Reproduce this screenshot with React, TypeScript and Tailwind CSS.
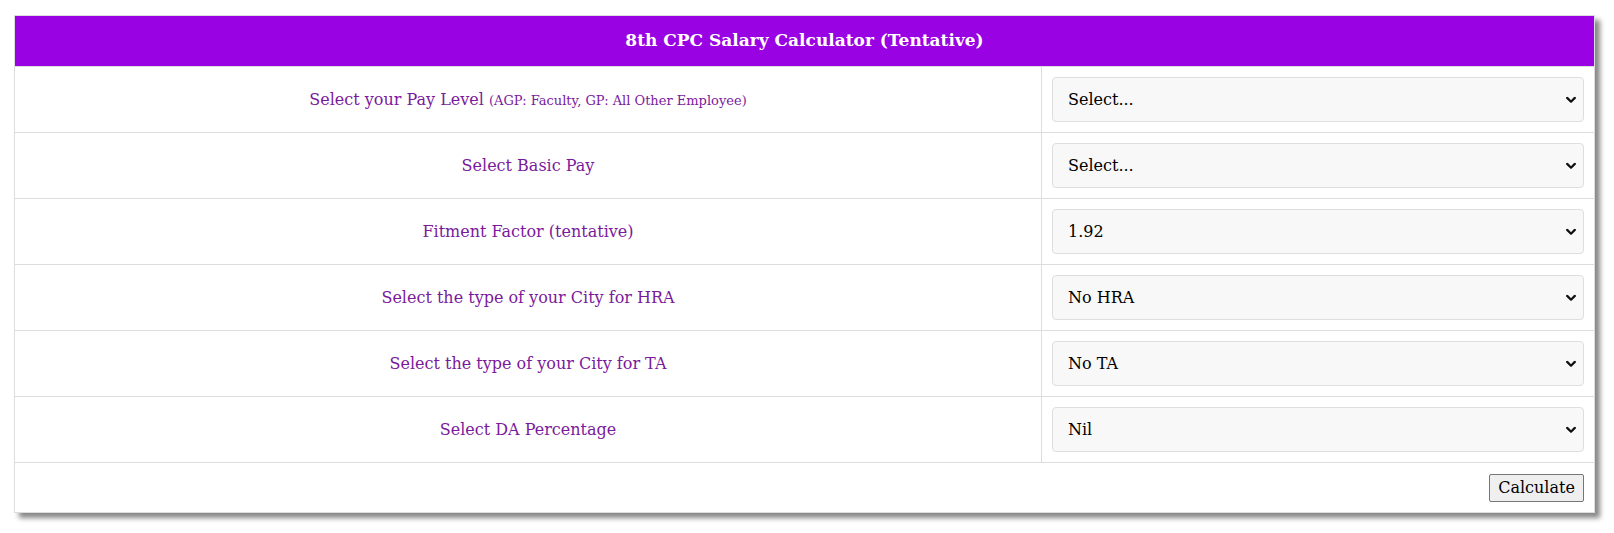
import React from "react";

const serif = "font-['DejaVu_Serif','Liberation_Serif',serif]";

function Chevron() {
  return (
    <svg
      className="pointer-events-none absolute right-[8px] top-1/2 -translate-y-1/2"
      width="10"
      height="7"
      viewBox="0 0 10 7"
      fill="none"
    >
      <path d="M1.2 1.4 L5 5.2 L8.8 1.4" stroke="#111" strokeWidth="2.2" strokeLinecap="round" strokeLinejoin="round" />
    </svg>
  );
}

function Sel({ value }: { value: string }) {
  return (
    <div className="relative h-[45px] w-full">
      <select
        defaultValue={value}
        className={`h-[45px] w-full appearance-none rounded-[4px] border border-[#dedede] bg-[#f8f8f8] pl-[15px] pr-8 text-[16px] text-black outline-none ${serif}`}
      >
        <option>{value}</option>
      </select>
      <Chevron />
    </div>
  );
}

const rows: { label: React.ReactNode; value: string }[] = [
  {
    label: (
      <>
        Select your Pay Level{" "}
        <span className="text-[13px]">(AGP: Faculty, GP: All Other Employee)</span>
      </>
    ),
    value: "Select...",
  },
  { label: "Select Basic Pay", value: "Select..." },
  { label: "Fitment Factor (tentative)", value: "1.92" },
  { label: "Select the type of your City for HRA", value: "No HRA" },
  { label: "Select the type of your City for TA", value: "No TA" },
  { label: "Select DA Percentage", value: "Nil" },
];

export default function App() {
  return (
    <div className={`min-h-[533px] bg-white pl-[14px] pt-[15px] ${serif}`}>
      <div className="w-[1581px] border border-[#dddddd] bg-white shadow-[5px_5px_5px_#888888]">
        <div className="flex h-[51px] items-center justify-center border-b border-[#dddddd] bg-[#9902e2] text-[17px] font-bold text-white">
          8th CPC Salary Calculator (Tentative)
        </div>
        {rows.map((r, i) => (
          <div key={i} className="flex h-[66px] border-b border-[#dddddd]">
            <div className="flex w-[1027px] items-center justify-center border-r border-[#dddddd] text-[16px] text-[#7a1a9c]">
              <span>{r.label}</span>
            </div>
            <div className="flex flex-1 items-center px-[10px]">
              <Sel value={r.value} />
            </div>
          </div>
        ))}
        <div className="flex h-[49px] items-center justify-end px-[10px] pt-[1px]">
          <button
            className={`h-[28px] w-[95px] rounded-[2px] border border-[#767676] bg-[#efefef] text-[16px] text-black ${serif}`}
          >
            Calculate
          </button>
        </div>
      </div>
    </div>
  );
}
